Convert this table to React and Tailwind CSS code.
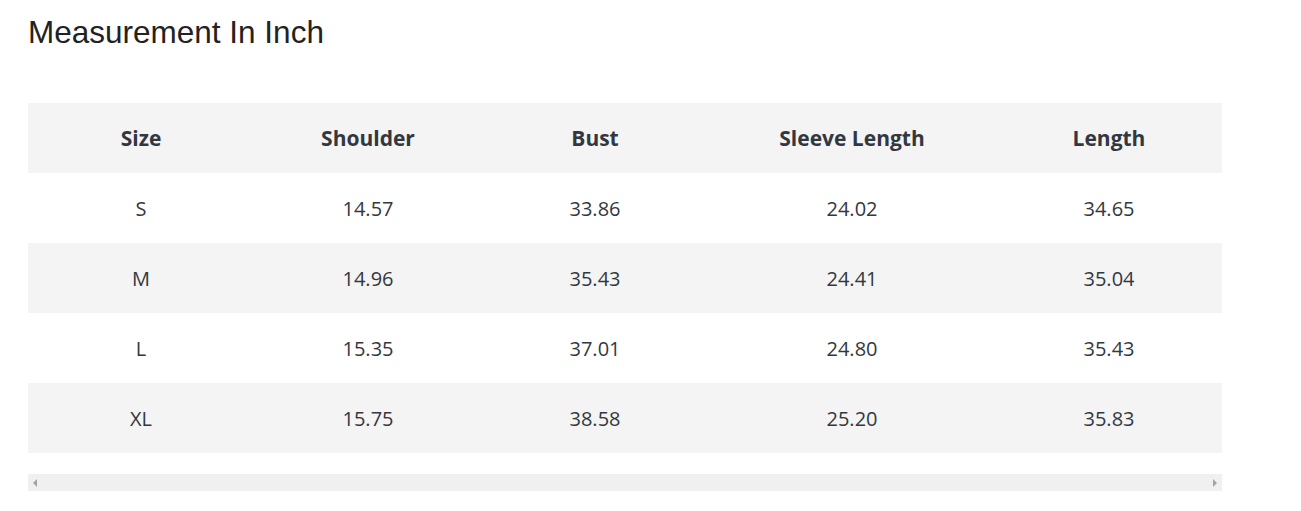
// Tabla de medidas — encabezado gris, filas alternadas y barra de scroll falsa abajo.

import React from 'react';

const columnas = ['Size', 'Shoulder', 'Bust', 'Sleeve Length', 'Length'];

const filas = [
  ['S', '14.57', '33.86', '24.02', '34.65'],
  ['M', '14.96', '35.43', '24.41', '35.04'],
  ['L', '15.35', '37.01', '24.80', '35.43'],
  ['XL', '15.75', '38.58', '25.20', '35.83'],
];

const grid = 'grid grid-cols-[226px_228px_226px_288px_226px] h-[70px] pt-[2px] items-center text-center';

export default function App() {
  return (
    <div className="w-[1301px] h-[511px] bg-white pl-[28px] pt-[14px]">
      <h1 className="text-[31.5px] leading-[36px] text-[#222] font-['Liberation_Sans',Arial,sans-serif]">
        Measurement In Inch
      </h1>

      <div className="mt-[53px] w-[1194px] font-['Open_Sans',sans-serif] text-[20px] text-[#333840]">
        <div className={`${grid} bg-[#f4f4f4] font-bold text-[21px]`}>
          {columnas.map(c => <div key={c}>{c}</div>)}
        </div>
        {filas.map((f, i) => (
          <div key={f[0]} className={`${grid} ${i % 2 === 1 ? 'bg-[#f4f4f4]' : 'bg-white'}`}>
            {f.map((v, j) => <div key={j}>{v}</div>)}
          </div>
        ))}
      </div>

      {/* scrollbar horizontal */}
      <div className="mt-[21px] w-[1194px] h-[17px] bg-[#f0f0f0] flex items-center justify-between px-[5px]">
        <span className="w-0 h-0 border-y-[4px] border-y-transparent border-r-[4px] border-r-[#a3a3a3]" />
        <span className="w-0 h-0 border-y-[4px] border-y-transparent border-l-[4px] border-l-[#a3a3a3]" />
      </div>
    </div>
  );
}
